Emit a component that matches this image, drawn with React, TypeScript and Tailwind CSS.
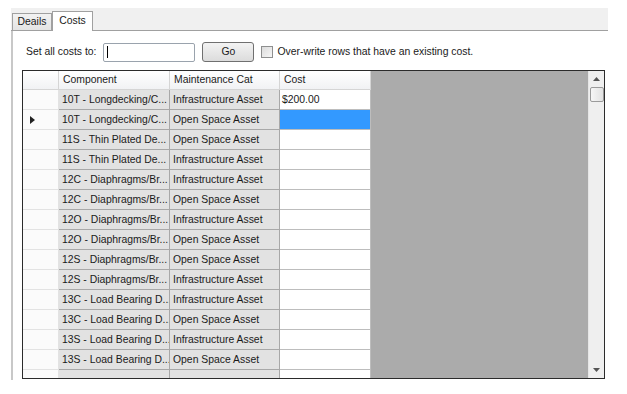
import React from "react";

type Row = { comp: string; cat: string; cost?: string };

const rows: Row[] = [
  { comp: "10T - Longdecking/C...", cat: "Infrastructure Asset", cost: "$200.00" },
  { comp: "10T - Longdecking/C...", cat: "Open Space Asset" },
  { comp: "11S - Thin Plated De...", cat: "Open Space Asset" },
  { comp: "11S - Thin Plated De...", cat: "Infrastructure Asset" },
  { comp: "12C - Diaphragms/Br...", cat: "Infrastructure Asset" },
  { comp: "12C - Diaphragms/Br...", cat: "Open Space Asset" },
  { comp: "12O - Diaphragms/Br...", cat: "Infrastructure Asset" },
  { comp: "12O - Diaphragms/Br...", cat: "Open Space Asset" },
  { comp: "12S - Diaphragms/Br...", cat: "Open Space Asset" },
  { comp: "12S - Diaphragms/Br...", cat: "Infrastructure Asset" },
  { comp: "13C - Load Bearing D...", cat: "Infrastructure Asset" },
  { comp: "13C - Load Bearing D...", cat: "Open Space Asset" },
  { comp: "13S - Load Bearing D...", cat: "Infrastructure Asset" },
  { comp: "13S - Load Bearing D...", cat: "Open Space Asset" },
  { comp: "", cat: "" },
];

const SELECTED = 1;

function HeaderCell({ w, label }: { w: string; label?: string }) {
  return (
    <div
      className={`${w} h-[19px] shrink-0 flex items-center pl-[4px] border-r border-b border-[#d5d5d5] bg-gradient-to-b from-white to-[#f1f2f4]`}
    >
      {label}
    </div>
  );
}

function Grid() {
  return (
    <div className="ml-[9px] mt-[8px] w-[583px] h-[309px] border border-[#2b2b2b] flex overflow-hidden">
      <div className="w-[348px] shrink-0 flex flex-col">
        <div className="flex">
          <HeaderCell w="w-[36px]" />
          <HeaderCell w="w-[111px]" label="Component" />
          <HeaderCell w="w-[110px]" label="Maintenance Cat" />
          <HeaderCell w="w-[91px]" label="Cost" />
        </div>
        {rows.map((r, i) => (
          <div key={i} className="flex h-[20px] shrink-0">
            <div className="w-[36px] shrink-0 border-r border-b border-[#e3e3e3] bg-[#fbfbfb] flex items-center pl-[7px]">
              {i === SELECTED && (
                <svg width="5" height="8" viewBox="0 0 5 8">
                  <path d="M0 0 L5 4 L0 8 Z" fill="#222" />
                </svg>
              )}
            </div>
            <div className="w-[111px] shrink-0 border-r border-b border-[#a8a8a8] bg-[#e2e2e2] flex items-center pl-[3px] whitespace-nowrap overflow-hidden">
              {r.comp}
            </div>
            <div className="w-[110px] shrink-0 border-r border-b border-[#a8a8a8] bg-[#e2e2e2] flex items-center pl-[3px] whitespace-nowrap overflow-hidden">
              {r.cat}
            </div>
            <div
              className={`w-[91px] shrink-0 border-r border-b border-[#bdbdbd] flex items-center pl-[2px] ${
                i === SELECTED ? "bg-[#3399ff]" : "bg-white"
              }`}
            >
              {r.cost}
            </div>
          </div>
        ))}
      </div>
      <div className="w-[217px] shrink-0 bg-[#ababab]" />
      <div className="w-[16px] shrink-0 bg-[#efefef] border-l border-[#e6e6e6] flex flex-col items-center">
        <div className="h-[16px] flex items-center justify-center">
          <svg width="7" height="4" viewBox="0 0 7 4">
            <path d="M3.5 0 L7 4 L0 4 Z" fill="#555" />
          </svg>
        </div>
        <div className="w-[14px] h-[15px] rounded-[2px] border border-[#9a9a9a] bg-gradient-to-r from-[#f6f6f6] to-[#e2e2e2]" />
        <div className="flex-1" />
        <div className="h-[16px] flex items-center justify-center">
          <svg width="7" height="4" viewBox="0 0 7 4">
            <path d="M0 0 L7 0 L3.5 4 Z" fill="#555" />
          </svg>
        </div>
      </div>
    </div>
  );
}

export default function App() {
  return (
    <div
      className="w-[627px] h-[394px] bg-white pt-[8px] pl-[11px] text-[10.4px] text-[#1a1a1a] overflow-hidden"
      style={{ fontFamily: '"Liberation Sans", Arial, sans-serif' }}
    >
      {/* tab strip */}
      <div className="w-[597px] h-[23px] bg-[#f0f0f0] border-b border-[#a0a0a0] flex items-end pl-[1px]">
        <div className="w-[40px] h-[17px] border border-b-0 border-[#a0a0a0] bg-gradient-to-b from-[#f2f2f2] to-[#e4e4e4] flex items-center justify-center">
          Deails
        </div>
        <div className="w-[41px] h-[20px] -mb-px border border-b-0 border-[#a0a0a0] bg-white flex items-start justify-center pt-[1px]">
          Costs
        </div>
      </div>

      {/* panel */}
      <div className="h-[349px] border-l-2 border-[#c8c8c8]">
        <div className="flex items-center pt-[11px] pl-[13px]">
          <span>Set all costs to:</span>
          <div className="ml-[7px] w-[92px] h-[19px] border border-[#9aa3ad] rounded-[2px] bg-white flex items-center pl-[3px]">
            <div className="w-px h-[12px] bg-black" />
          </div>
          <button className="ml-[7px] w-[52px] h-[20px] rounded-[3px] border border-[#707070] bg-gradient-to-b from-[#f3f3f3] to-[#dcdcdc] flex items-center justify-center">
            Go
          </button>
          <div className="ml-[7px] w-[12px] h-[12px] border border-[#8e8f8f] bg-gradient-to-br from-[#dcdcdc] to-[#f6f6f6]" />
          <span className="ml-[4px]">Over-write rows that have an existing cost.</span>
        </div>
        <Grid />
      </div>
    </div>
  );
}
